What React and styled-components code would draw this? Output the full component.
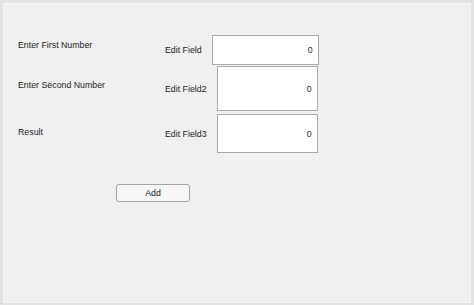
import React from "react";
import styled, { createGlobalStyle } from "styled-components";

const Global = createGlobalStyle`
  html, body { margin: 0; padding: 0; background: #f0f0f0; }
  body { font-family: "Liberation Sans", Arial, sans-serif; }
  * { box-sizing: border-box; }
`;

const Frame = styled.div`
  width: 474px;
  height: 305px;
  background: #e2e2e2;
  padding: 3px 3px 2px 3px;
  display: flex;
`;

const Panel = styled.div`
  flex: 1;
  background: #f0f0f0;
  border: 1px solid #f6f6f6;
  padding: 31px 0 0 14px;
  display: flex;
  flex-direction: column;
  font-size: 8.8px;
  color: #1c1c1c;
`;

const Rows = styled.div`
  display: grid;
  grid-template-columns: 147px auto;
  align-items: start;
`;

const SideLabel = styled.div`
  padding-top: ${(p) => p.$top}px;
  line-height: 10px;
  white-space: nowrap;
`;

const FieldGroup = styled.div`
  display: flex;
  align-items: center;
  gap: 10px;
  margin-top: ${(p) => p.$mt || 0}px;
`;

const FieldLabel = styled.span`
  white-space: nowrap;
  line-height: 10px;
`;

const Field = styled.div`
  width: ${(p) => p.$w}px;
  height: ${(p) => p.$h}px;
  background: #ffffff;
  border: 1px solid #a9a9a9;
  display: flex;
  align-items: center;
  justify-content: flex-end;
  padding-right: 5px;
  color: #2a2a2a;
`;

const ButtonRow = styled.div`
  padding: 31px 0 0 98px;
`;

const Button = styled.button`
  width: 74px;
  height: 18px;
  border: 1px solid #a4a4a4;
  border-radius: 3px;
  background: #f7f7f7;
  font-family: "Liberation Sans", Arial, sans-serif;
  font-size: 8.8px;
  color: #1a1a1a;
  padding: 0;
  display: flex;
  align-items: center;
  justify-content: center;
`;

const rows = [
  { side: "Enter First Number", sideTop: 5, label: "Edit Field", w: 107, h: 30, mt: 0 },
  { side: "Enter Second Number", sideTop: 14, label: "Edit Field2", w: 101, h: 45, mt: 1 },
  { side: "Result", sideTop: 13, label: "Edit Field3", w: 101, h: 39, mt: 3 },
];

export default function App() {
  return (
    <>
      <Global />
      <Frame>
        <Panel>
          <Rows>
            {rows.map((r) => (
              <React.Fragment key={r.label}>
                <SideLabel $top={r.sideTop + r.mt}>{r.side}</SideLabel>
                <FieldGroup $mt={r.mt}>
                  <FieldLabel>{r.label}</FieldLabel>
                  <Field $w={r.w} $h={r.h}>0</Field>
                </FieldGroup>
              </React.Fragment>
            ))}
          </Rows>
          <ButtonRow>
            <Button>Add</Button>
          </ButtonRow>
        </Panel>
      </Frame>
    </>
  );
}
